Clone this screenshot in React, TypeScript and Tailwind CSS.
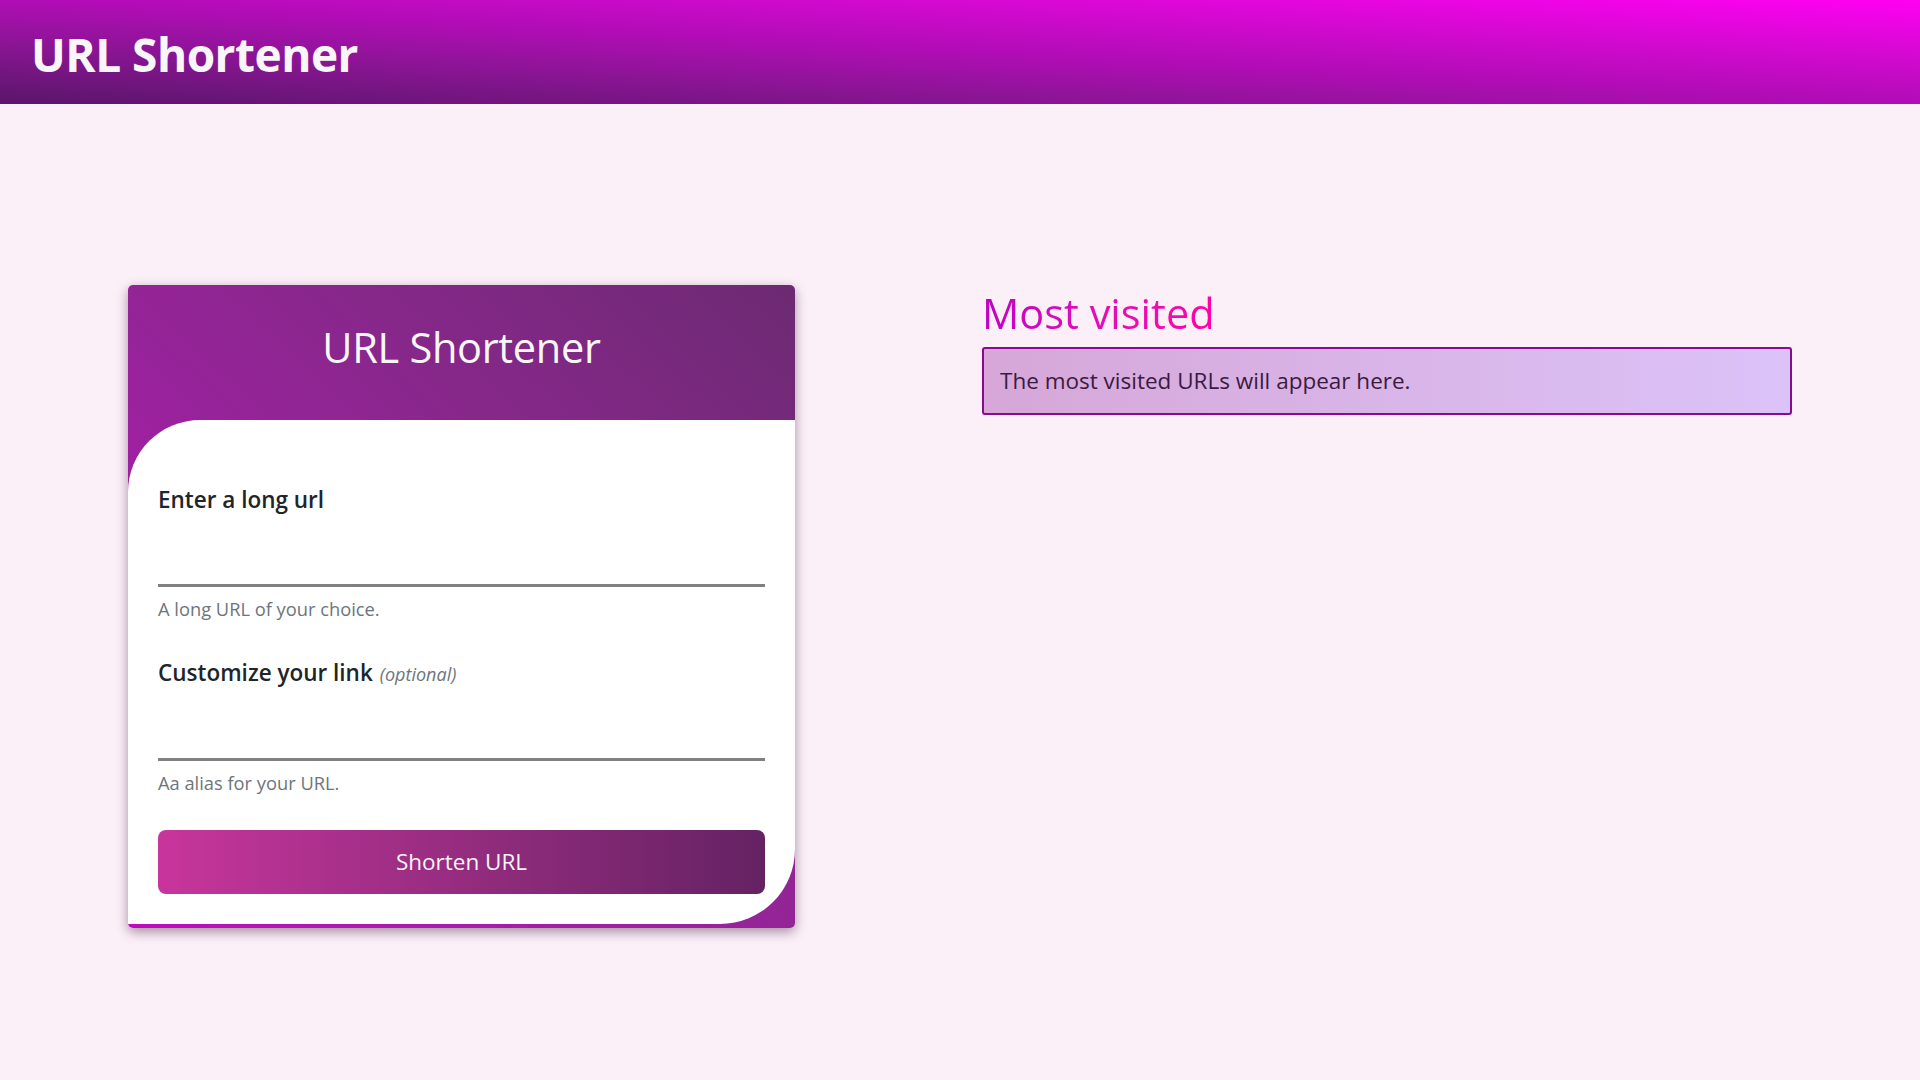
import React from 'react'

const font = { fontFamily: '"Open Sans", "Noto Sans", sans-serif' }

const Field = ({ label, hint, optional }: { label: string; hint: string; optional?: boolean }) => {
  return (
    <div className="flex flex-col">
      <label className="text-[22.5px] font-semibold text-[#212529] leading-[34px]">
        {label}
        {optional && <em className="ml-[7px] text-[18px] font-normal text-[#6c757d]">(optional)</em>}
      </label>
      <input className="mt-[30px] h-[40px] border-b-[3px] border-[#808080] bg-transparent outline-none" />
      <p className="mt-[9px] text-[18.3px] text-[#6c757d] leading-[26px]">{hint}</p>
    </div>
  )
}

export default function App() {
  return (
    <div className="min-h-screen bg-[#fcf0f8]" style={font}>
      <header className="h-[104px] flex items-center px-[31px] pt-[4px] bg-linear-to-tr from-[#5a156a] via-[#b00cb5] to-[#ff00f2]">
        <h1 className="text-[46px] font-bold text-[#f8f6f8] tracking-[-0.5px]">URL Shortener</h1>
      </header>

      <main className="flex px-[128px] pt-[181px]">
        <div className="w-[667px] rounded-[5px] bg-linear-to-tr from-[#bd0abd] to-[#6c2a72] shadow-[0_4px_12px_rgba(60,20,60,0.45)] pb-[4px]">
          <div className="h-[135px] flex items-center justify-center pb-[10px]">
            <h2 className="text-[41.5px] text-[#f8f6f8] tracking-[-0.3px]">URL Shortener</h2>
          </div>
          <div className="bg-white rounded-tl-[72px] rounded-br-[75px] px-[30px] pt-[63px] pb-[30px] flex flex-col gap-[34px]">
            <Field label="Enter a long url" hint="A long URL of your choice." />
            <Field label="Customize your link" hint="Aa alias for your URL." optional />
            <button className="h-[64px] rounded-[8px] bg-linear-to-r from-[#c8359c] to-[#652263] text-[#f8f4f8] text-[22.5px]">
              Shorten URL
            </button>
          </div>
        </div>

        <div className="ml-[187px] flex-1 pt-[3px]">
          <h2 className="text-[41.5px] leading-[50px] text-transparent bg-clip-text bg-linear-to-r from-[#c000c4] to-[#ff00a8] inline-block">
            Most visited
          </h2>
          <div className="mt-[9px] h-[68px] flex items-center px-[16px] border-2 border-[#8a0a8e] rounded-[3px] bg-linear-to-r from-[#d6a7d8] to-[#dbc2f8]">
            <p className="text-[22.5px] text-[#3b1a42]">The most visited URLs will appear here.</p>
          </div>
        </div>
      </main>
    </div>
  )
}
